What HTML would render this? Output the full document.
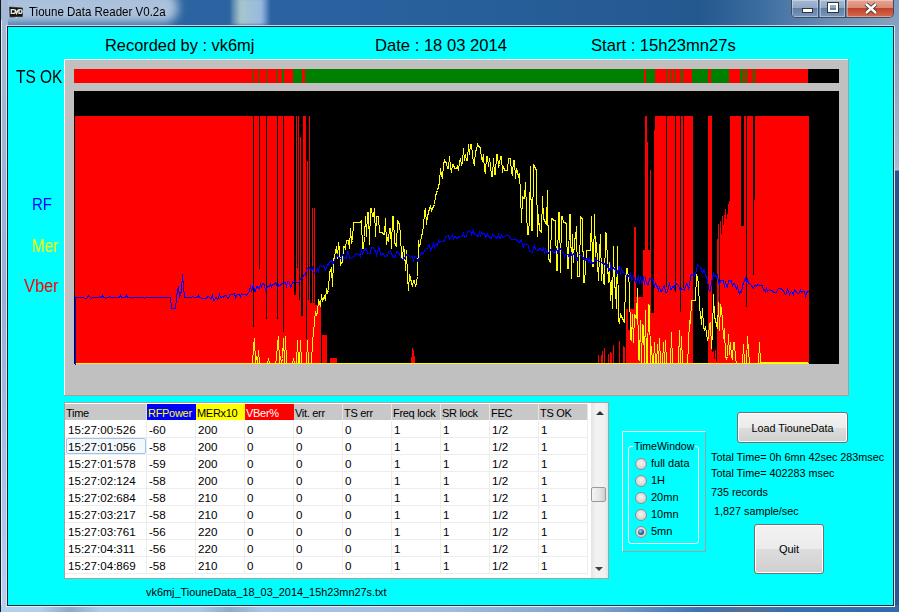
<!DOCTYPE html>
<html><head><meta charset="utf-8">
<style>
html,body{margin:0;padding:0;width:899px;height:612px;overflow:hidden;background:#2c5e94;font-family:"Liberation Sans",sans-serif;}
div{box-sizing:border-box}
.a{position:absolute;white-space:pre}
#tb{position:absolute;left:0;top:0;width:899px;height:27px;overflow:hidden;
 background:linear-gradient(90deg,#2d66a2 0px,#2a63a0 300px,#255c96 600px,#24598f 700px,#3b6d9f 760px,#6a8db4 830px,#88a2c0 899px);}
#lf{position:absolute;left:0;top:0;width:8px;height:612px;background:linear-gradient(180deg,#a4bad6,#94b2d6 300px,#b4d0f0)}
#rf{position:absolute;left:893px;top:0;width:6px;height:612px;background:linear-gradient(180deg,#7f9cc0 0,#a6b8ce 165px,#b4c2d4 170px,#28548e 171px,#2a5894)}
#bf{position:absolute;left:0;top:605px;width:899px;height:7px;background:linear-gradient(90deg,#b4d0f0 0,#a8c6ea 250px,#9cbce0 450px,#7aa0cc 600px,#3a74b4 700px,#2f6aac 899px)}
#client{position:absolute;left:8px;top:27px;width:885px;height:578px;background:#00ffff}
.hc{position:absolute;top:404px;height:16px;font-size:11px;line-height:18px;padding-left:1px;white-space:pre;letter-spacing:-0.3px}
.c{position:absolute;height:17px;font-size:11.6px;line-height:18px;padding-left:2px;white-space:pre;color:#000;border-bottom:1px solid #ededed;border-right:1px solid #ededed}
.btn{position:absolute;border:1px solid #707070;border-radius:3px;background:linear-gradient(180deg,#f2f2f2 0%,#ebebeb 50%,#dddddd 51%,#cfcfcf 100%);box-shadow:inset 0 0 0 1px #fcfcfc;font-size:11px;color:#000;text-align:center}
.rad{position:absolute;left:635px;width:12px;height:12px;border-radius:50%;border:1px solid #8e8f8f;background:radial-gradient(circle at 50% 40%,#f4f4f4,#d4d4d4 70%,#bdbdbd)}
.rl{position:absolute;left:651px;font-size:11px;white-space:pre;color:#000}
</style></head><body>
<div id="tb"><div class="a" style="left:-12px;top:-8px;width:190px;height:31px;background:#acc2dc;border-radius:14px;filter:blur(5px)"></div></div>
<div class="a" style="left:231px;top:-2px;width:38px;height:27px;background:linear-gradient(90deg,rgba(190,215,205,.2),rgba(190,215,210,.85) 25%,rgba(170,200,235,.85) 80%,rgba(150,185,225,.2));filter:blur(1.5px)"></div>
<div id="lf"></div><div id="rf"></div><div id="bf"></div>
<div class="a" style="left:0;top:0;width:1px;height:612px;background:#101820"></div>
<div class="a" style="left:1px;top:20px;width:1px;height:585px;background:#e4eefa"></div>
<div class="a" style="left:6px;top:25px;width:1px;height:581px;background:#d4e2f4"></div>
<div class="a" style="left:6px;top:25px;width:888px;height:1px;background:#c8d8ee"></div>
<div class="a" style="left:7px;top:26px;width:887px;height:580px;background:#1a2436"></div>
<div class="a" style="left:894px;top:26px;width:1px;height:580px;background:#d8e4f2"></div>
<div class="a" style="left:6px;top:606px;width:889px;height:1px;background:#e8f0fa"></div>
<div class="a" style="left:40px;top:607px;width:60px;height:5px;background:linear-gradient(90deg,rgba(60,80,110,0),rgba(60,80,110,.3),rgba(60,80,110,0))"></div>
<div class="a" style="left:200px;top:607px;width:60px;height:5px;background:linear-gradient(90deg,rgba(60,80,110,0),rgba(60,80,110,.25),rgba(60,80,110,0))"></div>
<div class="a" style="left:700px;top:607px;width:90px;height:5px;background:linear-gradient(90deg,rgba(110,110,120,0),rgba(110,110,120,.5),rgba(110,110,120,0))"></div>
<div id="client"></div>
<!-- title -->
<svg class="a" style="left:9px;top:6px" width="15" height="13" viewBox="0 0 15 13">
 <path d="M0.5 1l13 1v8.5l-12.5 0.5z" fill="#161616" stroke="#2a2a2a" stroke-width="0.6"/>
 <path d="M6 11.2h3l-1.5 1.3z" fill="#d0dcea"/>
 <path d="M2.3 3.6h2.2a2 1.9 0 0 1 0 3.8h-2.2z M6.3 3.6l1.4 3.8 1.4-3.8 M10 7.4v-3.8h1a2 1.9 0 0 1 0 3.8z" fill="none" stroke="#ecebe4" stroke-width="1.3"/>
</svg>
<div class="a" style="left:29px;top:5px;font-size:12.4px;transform:scaleX(0.93);transform-origin:0 0;color:#000">Tioune Data Reader V0.2a</div>
<!-- caption buttons -->
<div class="a" style="left:791px;top:0;width:103px;height:18px;border:1px solid #3c4c62;border-top:none;border-radius:0 0 5px 5px;overflow:hidden;background:#6a8ab0">
 <div class="a" style="left:0;top:0;width:27px;height:17px;background:linear-gradient(180deg,#a6bad2 0%,#90a8c6 45%,#5f7fa6 50%,#7a98bc 100%);border-right:1px solid #3c4c62;box-shadow:inset 0 0 0 1px rgba(255,255,255,.35)"></div>
 <div class="a" style="left:28px;top:0;width:26px;height:17px;background:linear-gradient(180deg,#a6bad2 0%,#90a8c6 45%,#5f7fa6 50%,#7a98bc 100%);border-right:1px solid #3c4c62;box-shadow:inset 0 0 0 1px rgba(255,255,255,.35)"></div>
 <div class="a" style="left:55px;top:0;width:47px;height:17px;background:linear-gradient(180deg,#e8a493 0%,#d98a74 45%,#c2412a 50%,#d66a50 100%);box-shadow:inset 0 0 0 1px rgba(255,255,255,.35)"></div>
 <div class="a" style="left:10px;top:8px;width:9px;height:3px;background:#fff;border:1px solid #333;box-sizing:content-box;"></div>
 <div class="a" style="left:36px;top:3px;width:10px;height:9px;border:2px solid #fff;outline:1px solid #333;box-sizing:border-box"></div>
 <svg class="a" style="left:71px;top:2px" width="16" height="13" viewBox="0 0 16 13"><path d="M3 2l10 9M13 2L3 11" stroke="#333" stroke-width="4.2"/><path d="M3 2l10 9M13 2L3 11" stroke="#fff" stroke-width="2.4"/></svg>
</div>
<!-- header texts -->
<div class="a" style="left:105px;top:36px;font-size:16.4px">Recorded by : vk6mj</div>
<div class="a" style="left:375px;top:36px;font-size:16.6px">Date : 18 03 2014</div>
<div class="a" style="left:591px;top:36px;font-size:16.6px">Start : 15h23mn27s</div>
<div class="a" style="left:16px;top:66px;font-size:18.6px;transform:scaleX(0.83);transform-origin:0 0">TS OK</div>
<div class="a" style="left:32px;top:195px;font-size:17px;transform:scaleX(0.88);transform-origin:0 0;color:#0000ff">RF</div>
<div class="a" style="left:32px;top:236px;font-size:17.6px;transform:scaleX(0.88);transform-origin:0 0;color:#ffff00">Mer</div>
<div class="a" style="left:24px;top:276px;font-size:17.6px;transform:scaleX(0.93);transform-origin:0 0;color:#ff0000">Vber</div>
<svg width="899" height="612" style="position:absolute;left:0;top:0" shape-rendering="crispEdges">
<rect x="64" y="59" width="785" height="337" fill="#c0c0c0"/>
<rect x="64" y="59" width="785" height="1" fill="#ffffff"/><rect x="64" y="59" width="1" height="337" fill="#ffffff"/>
<rect x="64" y="395" width="785" height="1" fill="#a89c9c"/><rect x="848" y="59" width="1" height="337" fill="#a89c9c"/>
<rect x="74" y="69" width="765" height="14" fill="#000"/>
<rect x="74" y="69" width="178" height="14" fill="#ff0000"/>
<rect x="252" y="69" width="1" height="14" fill="#008000"/>
<rect x="253" y="69" width="5" height="14" fill="#ff0000"/>
<rect x="258" y="69" width="1" height="14" fill="#008000"/>
<rect x="259" y="69" width="7" height="14" fill="#ff0000"/>
<rect x="266" y="69" width="1" height="14" fill="#008000"/>
<rect x="267" y="69" width="9" height="14" fill="#ff0000"/>
<rect x="276" y="69" width="1" height="14" fill="#008000"/>
<rect x="277" y="69" width="5" height="14" fill="#ff0000"/>
<rect x="282" y="69" width="2" height="14" fill="#008000"/>
<rect x="284" y="69" width="9" height="14" fill="#ff0000"/>
<rect x="293" y="69" width="9" height="14" fill="#008000"/>
<rect x="302" y="69" width="3" height="14" fill="#ff0000"/>
<rect x="305" y="69" width="339" height="14" fill="#008000"/>
<rect x="644" y="69" width="2" height="14" fill="#ff0000"/>
<rect x="646" y="69" width="9" height="14" fill="#008000"/>
<rect x="655" y="69" width="11" height="14" fill="#ff0000"/>
<rect x="666" y="69" width="1" height="14" fill="#008000"/>
<rect x="667" y="69" width="4" height="14" fill="#ff0000"/>
<rect x="671" y="69" width="1" height="14" fill="#008000"/>
<rect x="672" y="69" width="3" height="14" fill="#ff0000"/>
<rect x="675" y="69" width="1" height="14" fill="#008000"/>
<rect x="676" y="69" width="4" height="14" fill="#ff0000"/>
<rect x="680" y="69" width="1" height="14" fill="#008000"/>
<rect x="681" y="69" width="2" height="14" fill="#ff0000"/>
<rect x="683" y="69" width="1" height="14" fill="#008000"/>
<rect x="684" y="69" width="8" height="14" fill="#ff0000"/>
<rect x="692" y="69" width="16" height="14" fill="#008000"/>
<rect x="708" y="69" width="3" height="14" fill="#ff0000"/>
<rect x="711" y="69" width="18" height="14" fill="#008000"/>
<rect x="729" y="69" width="11" height="14" fill="#ff0000"/>
<rect x="740" y="69" width="3" height="14" fill="#008000"/>
<rect x="743" y="69" width="2" height="14" fill="#ff0000"/>
<rect x="745" y="69" width="2" height="14" fill="#008000"/>
<rect x="747" y="69" width="6" height="14" fill="#ff0000"/>
<rect x="753" y="69" width="2" height="14" fill="#008000"/>
<rect x="755" y="69" width="53" height="14" fill="#ff0000"/>
<rect x="74" y="91" width="765" height="273" fill="#000"/>
<rect x="75" y="116" width="178" height="248" fill="#ff0000"/>
<rect x="253" y="327" width="1" height="37" fill="#ff0000"/>
<rect x="254" y="116" width="5" height="248" fill="#ff0000"/>
<rect x="259" y="269" width="1" height="95" fill="#ff0000"/>
<rect x="260" y="116" width="6" height="248" fill="#ff0000"/>
<rect x="266" y="319" width="1" height="45" fill="#ff0000"/>
<rect x="267" y="116" width="10" height="248" fill="#ff0000"/>
<rect x="277" y="319" width="1" height="45" fill="#ff0000"/>
<rect x="278" y="116" width="5" height="248" fill="#ff0000"/>
<rect x="283" y="332" width="1" height="32" fill="#ff0000"/>
<rect x="284" y="116" width="10" height="248" fill="#ff0000"/>
<rect x="294" y="295" width="2" height="69" fill="#ff0000"/>
<rect x="296" y="116" width="1" height="248" fill="#ff0000"/>
<rect x="297" y="268" width="1" height="96" fill="#ff0000"/>
<rect x="298" y="116" width="1" height="248" fill="#ff0000"/>
<rect x="299" y="300" width="1" height="64" fill="#ff0000"/>
<rect x="300" y="137" width="1" height="227" fill="#ff0000"/>
<rect x="301" y="316" width="2" height="48" fill="#ff0000"/>
<rect x="303" y="116" width="3" height="248" fill="#ff0000"/>
<rect x="306" y="339" width="1" height="25" fill="#ff0000"/>
<rect x="307" y="161" width="1" height="203" fill="#ff0000"/>
<rect x="308" y="300" width="1" height="64" fill="#ff0000"/>
<rect x="309" y="116" width="1" height="248" fill="#ff0000"/>
<rect x="310" y="303" width="2" height="61" fill="#ff0000"/>
<rect x="312" y="208" width="1" height="156" fill="#ff0000"/>
<rect x="313" y="303" width="1" height="61" fill="#ff0000"/>
<rect x="314" y="208" width="1" height="156" fill="#ff0000"/>
<rect x="315" y="305" width="6" height="59" fill="#ff0000"/>
<rect x="322" y="335" width="5" height="29" fill="#ff0000"/>
<rect x="330" y="358" width="7" height="6" fill="#ff0000"/>
<rect x="411" y="357" width="1" height="7" fill="#ff0000"/>
<rect x="412" y="348" width="1" height="16" fill="#ff0000"/>
<rect x="413" y="350" width="1" height="14" fill="#ff0000"/>
<rect x="414" y="356" width="1" height="8" fill="#ff0000"/>
<rect x="598" y="355" width="1" height="9" fill="#ff0000"/>
<rect x="601" y="355" width="1" height="9" fill="#ff0000"/>
<rect x="602" y="351" width="1" height="13" fill="#ff0000"/>
<rect x="604" y="348" width="1" height="16" fill="#ff0000"/>
<rect x="608" y="354" width="1" height="10" fill="#ff0000"/>
<rect x="610" y="352" width="1" height="12" fill="#ff0000"/>
<rect x="611" y="353" width="1" height="11" fill="#ff0000"/>
<rect x="613" y="345" width="1" height="19" fill="#ff0000"/>
<rect x="619" y="341" width="1" height="23" fill="#ff0000"/>
<rect x="623" y="346" width="1" height="18" fill="#ff0000"/>
<rect x="624" y="347" width="1" height="17" fill="#ff0000"/>
<rect x="626" y="309" width="2" height="55" fill="#ff0000"/>
<rect x="628" y="330" width="2" height="34" fill="#ff0000"/>
<rect x="630" y="309" width="4" height="55" fill="#ff0000"/>
<rect x="634" y="227" width="2" height="137" fill="#ff0000"/>
<rect x="636" y="297" width="7" height="67" fill="#ff0000"/>
<rect x="643" y="250" width="2" height="114" fill="#ff0000"/>
<rect x="645" y="116" width="2" height="248" fill="#ff0000"/>
<rect x="647" y="142" width="1" height="222" fill="#ff0000"/>
<rect x="648" y="250" width="2" height="114" fill="#ff0000"/>
<rect x="650" y="170" width="1" height="194" fill="#ff0000"/>
<rect x="651" y="313" width="3" height="51" fill="#ff0000"/>
<rect x="654" y="130" width="1" height="234" fill="#ff0000"/>
<rect x="655" y="116" width="11" height="248" fill="#ff0000"/>
<rect x="666" y="287" width="1" height="77" fill="#ff0000"/>
<rect x="667" y="116" width="8" height="248" fill="#ff0000"/>
<rect x="675" y="292" width="1" height="72" fill="#ff0000"/>
<rect x="676" y="116" width="4" height="248" fill="#ff0000"/>
<rect x="680" y="312" width="1" height="52" fill="#ff0000"/>
<rect x="681" y="116" width="2" height="248" fill="#ff0000"/>
<rect x="683" y="288" width="1" height="76" fill="#ff0000"/>
<rect x="684" y="116" width="9" height="248" fill="#ff0000"/>
<rect x="708" y="116" width="4" height="248" fill="#ff0000"/>
<rect x="712" y="352" width="1" height="12" fill="#ff0000"/>
<rect x="713" y="351" width="1" height="13" fill="#ff0000"/>
<rect x="714" y="359" width="1" height="5" fill="#ff0000"/>
<rect x="715" y="350" width="1" height="14" fill="#ff0000"/>
<rect x="716" y="361" width="1" height="3" fill="#ff0000"/>
<rect x="717" y="239" width="1" height="125" fill="#ff0000"/>
<rect x="718" y="224" width="1" height="140" fill="#ff0000"/>
<rect x="719" y="303" width="1" height="61" fill="#ff0000"/>
<rect x="720" y="221" width="1" height="143" fill="#ff0000"/>
<rect x="721" y="234" width="1" height="130" fill="#ff0000"/>
<rect x="722" y="216" width="1" height="148" fill="#ff0000"/>
<rect x="723" y="225" width="1" height="139" fill="#ff0000"/>
<rect x="724" y="215" width="1" height="149" fill="#ff0000"/>
<rect x="725" y="209" width="1" height="155" fill="#ff0000"/>
<rect x="726" y="219" width="1" height="145" fill="#ff0000"/>
<rect x="727" y="214" width="1" height="150" fill="#ff0000"/>
<rect x="728" y="204" width="1" height="160" fill="#ff0000"/>
<rect x="729" y="201" width="1" height="163" fill="#ff0000"/>
<rect x="730" y="116" width="11" height="248" fill="#ff0000"/>
<rect x="741" y="226" width="3" height="138" fill="#ff0000"/>
<rect x="744" y="116" width="2" height="248" fill="#ff0000"/>
<rect x="746" y="307" width="1" height="57" fill="#ff0000"/>
<rect x="747" y="116" width="6" height="248" fill="#ff0000"/>
<rect x="753" y="275" width="1" height="89" fill="#ff0000"/>
<rect x="754" y="200" width="1" height="164" fill="#ff0000"/>
<rect x="755" y="116" width="54" height="248" fill="#ff0000"/>
<rect x="75" y="363" width="734" height="1" fill="#ffff00"/>
<polyline fill="none" stroke="#ffff00" stroke-width="1" points="75.5,363.5 76.5,363.5 77.5,363.5 78.5,363.5 79.5,363.5 80.5,363.5 81.5,363.5 82.5,363.5 83.5,363.5 84.5,363.5 85.5,363.5 86.5,363.5 87.5,363.5 88.5,363.5 89.5,363.5 90.5,363.5 91.5,363.5 92.5,363.5 93.5,363.5 94.5,363.5 95.5,363.5 96.5,363.5 97.5,363.5 98.5,363.5 99.5,363.5 100.5,363.5 101.5,363.5 102.5,363.5 103.5,363.5 104.5,363.5 105.5,363.5 106.5,363.5 107.5,363.5 108.5,363.5 109.5,363.5 110.5,363.5 111.5,363.5 112.5,363.5 113.5,363.5 114.5,363.5 115.5,363.5 116.5,363.5 117.5,363.5 118.5,363.5 119.5,363.5 120.5,363.5 121.5,363.5 122.5,363.5 123.5,363.5 124.5,363.5 125.5,363.5 126.5,363.5 127.5,363.5 128.5,363.5 129.5,363.5 130.5,363.5 131.5,363.5 132.5,363.5 133.5,363.5 134.5,363.5 135.5,363.5 136.5,363.5 137.5,363.5 138.5,363.5 139.5,363.5 140.5,363.5 141.5,363.5 142.5,363.5 143.5,363.5 144.5,363.5 145.5,363.5 146.5,363.5 147.5,363.5 148.5,363.5 149.5,363.5 150.5,363.5 151.5,363.5 152.5,363.5 153.5,363.5 154.5,363.5 155.5,363.5 156.5,363.5 157.5,363.5 158.5,363.5 159.5,363.5 160.5,363.5 161.5,363.5 162.5,363.5 163.5,363.5 164.5,363.5 165.5,363.5 166.5,363.5 167.5,363.5 168.5,363.5 169.5,363.5 170.5,363.5 171.5,363.5 172.5,363.5 173.5,363.5 174.5,363.5 175.5,363.5 176.5,363.5 177.5,363.5 178.5,363.5 179.5,363.5 180.5,363.5 181.5,363.5 182.5,363.5 183.5,363.5 184.5,363.5 185.5,363.5 186.5,363.5 187.5,363.5 188.5,363.5 189.5,363.5 190.5,363.5 191.5,363.5 192.5,363.5 193.5,363.5 194.5,363.5 195.5,363.5 196.5,363.5 197.5,363.5 198.5,363.5 199.5,363.5 200.5,363.5 201.5,363.5 202.5,363.5 203.5,363.5 204.5,363.5 205.5,363.5 206.5,363.5 207.5,363.5 208.5,363.5 209.5,363.5 210.5,363.5 211.5,363.5 212.5,363.5 213.5,363.5 214.5,363.5 215.5,363.5 216.5,363.5 217.5,363.5 218.5,363.5 219.5,363.5 220.5,363.5 221.5,363.5 222.5,363.5 223.5,363.5 224.5,363.5 225.5,363.5 226.5,363.5 227.5,363.5 228.5,363.5 229.5,363.5 230.5,363.5 231.5,363.5 232.5,363.5 233.5,363.5 234.5,363.5 235.5,363.5 236.5,363.5 237.5,363.5 238.5,363.5 239.5,363.5 240.5,363.5 241.5,363.5 242.5,363.5 243.5,363.5 244.5,363.5 245.5,363.5 246.5,363.5 247.5,363.5 248.5,363.5 249.5,363.5 250.5,363.5 251.5,363.5 252.5,363.5 253.5,346.5 254.5,338.5 255.5,363.5 256.5,356.5 257.5,363.5 258.5,350.5 259.5,363.5 260.5,363.5 261.5,363.5 262.5,363.5 263.5,363.5 264.5,363.5 265.5,363.5 266.5,363.5 267.5,363.5 268.5,358.5 269.5,363.5 270.5,363.5 271.5,363.5 272.5,363.5 273.5,363.5 274.5,363.5 275.5,363.5 276.5,358.5 277.5,344.5 278.5,336.5 279.5,363.5 280.5,356.5 281.5,363.5 282.5,358.5 283.5,338.5 284.5,363.5 285.5,336.5 286.5,363.5 287.5,363.5 288.5,363.5 289.5,363.5 290.5,363.5 291.5,363.5 292.5,363.5 293.5,358.5 294.5,363.5 295.5,363.5 296.5,363.5 297.5,340.5 298.5,363.5 299.5,363.5 300.5,340.5 301.5,363.5 302.5,363.5 303.5,363.5 304.5,363.5 305.5,363.5 306.5,363.5 307.5,340.5 308.5,363.5 309.5,363.5 310.5,363.5 311.5,363.5 312.5,340.5 313.5,334.5 314.5,320.5 315.5,312.5 316.5,314.5 317.5,312.5 318.5,300.5 319.5,302.5 320.5,306.5 321.5,294.5 322.5,300.5 323.5,298.5 324.5,296.5 325.5,300.5 326.5,288.5 327.5,292.5 328.5,290.5 329.5,272.5 330.5,270.5 331.5,268.5 332.5,286.5 333.5,260.5 334.5,256.5 335.5,252.5 336.5,246.5 337.5,258.5 338.5,242.5 339.5,248.5 340.5,264.5 341.5,262.5 342.5,262.5 343.5,246.5 344.5,246.5 345.5,248.5 346.5,240.5 347.5,240.5 348.5,240.5 349.5,248.5 350.5,228.5 351.5,242.5 352.5,240.5 353.5,222.5 354.5,222.5 355.5,222.5 356.5,222.5 357.5,222.5 358.5,222.5 359.5,222.5 360.5,222.5 361.5,220.5 362.5,248.5 363.5,248.5 364.5,236.5 365.5,216.5 366.5,236.5 367.5,212.5 368.5,212.5 369.5,244.5 370.5,208.5 371.5,208.5 372.5,216.5 373.5,216.5 374.5,208.5 375.5,236.5 376.5,216.5 377.5,216.5 378.5,216.5 379.5,232.5 380.5,232.5 381.5,232.5 382.5,232.5 383.5,234.5 384.5,234.5 385.5,218.5 386.5,244.5 387.5,238.5 388.5,240.5 389.5,228.5 390.5,228.5 391.5,248.5 392.5,216.5 393.5,216.5 394.5,242.5 395.5,244.5 396.5,246.5 397.5,220.5 398.5,222.5 399.5,224.5 400.5,234.5 401.5,256.5 402.5,258.5 403.5,246.5 404.5,250.5 405.5,270.5 406.5,250.5 407.5,276.5 408.5,290.5 409.5,274.5 410.5,278.5 411.5,282.5 412.5,286.5 413.5,280.5 414.5,280.5 415.5,286.5 416.5,282.5 417.5,276.5 418.5,240.5 419.5,246.5 420.5,242.5 421.5,236.5 422.5,232.5 423.5,226.5 424.5,212.5 425.5,208.5 426.5,224.5 427.5,216.5 428.5,212.5 429.5,208.5 430.5,206.5 431.5,210.5 432.5,208.5 433.5,206.5 434.5,204.5 435.5,196.5 436.5,192.5 437.5,190.5 438.5,186.5 439.5,182.5 440.5,168.5 441.5,174.5 442.5,178.5 443.5,164.5 444.5,160.5 445.5,162.5 446.5,162.5 447.5,168.5 448.5,168.5 449.5,156.5 450.5,166.5 451.5,172.5 452.5,164.5 453.5,164.5 454.5,168.5 455.5,168.5 456.5,168.5 457.5,166.5 458.5,170.5 459.5,162.5 460.5,158.5 461.5,164.5 462.5,162.5 463.5,148.5 464.5,160.5 465.5,154.5 466.5,160.5 467.5,160.5 468.5,144.5 469.5,154.5 470.5,144.5 471.5,144.5 472.5,154.5 473.5,162.5 474.5,164.5 475.5,150.5 476.5,150.5 477.5,144.5 478.5,146.5 479.5,146.5 480.5,148.5 481.5,158.5 482.5,160.5 483.5,154.5 484.5,170.5 485.5,172.5 486.5,156.5 487.5,156.5 488.5,166.5 489.5,158.5 490.5,164.5 491.5,176.5 492.5,176.5 493.5,158.5 494.5,174.5 495.5,174.5 496.5,154.5 497.5,154.5 498.5,166.5 499.5,164.5 500.5,156.5 501.5,156.5 502.5,172.5 503.5,166.5 504.5,170.5 505.5,170.5 506.5,170.5 507.5,170.5 508.5,158.5 509.5,158.5 510.5,158.5 511.5,172.5 512.5,174.5 513.5,160.5 514.5,160.5 515.5,178.5 516.5,168.5 517.5,172.5 518.5,176.5 519.5,174.5 520.5,192.5 521.5,222.5 522.5,196.5 523.5,198.5 524.5,198.5 525.5,182.5 526.5,210.5 527.5,234.5 528.5,234.5 529.5,218.5 530.5,166.5 531.5,230.5 532.5,230.5 533.5,164.5 534.5,166.5 535.5,168.5 536.5,170.5 537.5,236.5 538.5,214.5 539.5,230.5 540.5,230.5 541.5,232.5 542.5,196.5 543.5,218.5 544.5,220.5 545.5,222.5 546.5,224.5 547.5,190.5 548.5,258.5 549.5,260.5 550.5,262.5 551.5,218.5 552.5,218.5 553.5,220.5 554.5,220.5 555.5,220.5 556.5,270.5 557.5,270.5 558.5,212.5 559.5,212.5 560.5,272.5 561.5,216.5 562.5,216.5 563.5,222.5 564.5,222.5 565.5,222.5 566.5,224.5 567.5,268.5 568.5,268.5 569.5,214.5 570.5,214.5 571.5,278.5 572.5,234.5 573.5,262.5 574.5,238.5 575.5,238.5 576.5,226.5 577.5,276.5 578.5,276.5 579.5,276.5 580.5,216.5 581.5,218.5 582.5,218.5 583.5,282.5 584.5,282.5 585.5,268.5 586.5,250.5 587.5,250.5 588.5,250.5 589.5,250.5 590.5,250.5 591.5,216.5 592.5,266.5 593.5,266.5 594.5,214.5 595.5,256.5 596.5,242.5 597.5,262.5 598.5,280.5 599.5,254.5 600.5,234.5 601.5,280.5 602.5,264.5 603.5,282.5 604.5,284.5 605.5,232.5 606.5,234.5 607.5,264.5 608.5,282.5 609.5,262.5 610.5,300.5 611.5,280.5 612.5,308.5 613.5,246.5 614.5,286.5 615.5,288.5 616.5,308.5 617.5,246.5 618.5,320.5 619.5,322.5 620.5,314.5 621.5,316.5 622.5,318.5 623.5,320.5 624.5,322.5 625.5,282.5 626.5,268.5 627.5,268.5 628.5,278.5 629.5,284.5 630.5,338.5 631.5,340.5 632.5,314.5 633.5,342.5 634.5,314.5 635.5,316.5 636.5,318.5 637.5,288.5 638.5,358.5 639.5,360.5 640.5,320.5 641.5,363.5 642.5,324.5 643.5,326.5 644.5,363.5 645.5,310.5 646.5,363.5 647.5,363.5 648.5,304.5 649.5,306.5 650.5,363.5 651.5,346.5 652.5,363.5 653.5,363.5 654.5,342.5 655.5,363.5 656.5,363.5 657.5,344.5 658.5,363.5 659.5,338.5 660.5,363.5 661.5,363.5 662.5,363.5 663.5,342.5 664.5,363.5 665.5,340.5 666.5,363.5 667.5,363.5 668.5,363.5 669.5,363.5 670.5,363.5 671.5,332.5 672.5,363.5 673.5,363.5 674.5,363.5 675.5,363.5 676.5,363.5 677.5,363.5 678.5,363.5 679.5,330.5 680.5,363.5 681.5,336.5 682.5,363.5 683.5,363.5 684.5,363.5 685.5,363.5 686.5,363.5 687.5,363.5 688.5,344.5 689.5,320.5 690.5,322.5 691.5,300.5 692.5,300.5 693.5,300.5 694.5,300.5 695.5,300.5 696.5,274.5 697.5,278.5 698.5,282.5 699.5,308.5 700.5,312.5 701.5,324.5 702.5,308.5 703.5,326.5 704.5,330.5 705.5,326.5 706.5,332.5 707.5,340.5 708.5,336.5 709.5,324.5 710.5,322.5 711.5,348.5 712.5,332.5 713.5,294.5 714.5,316.5 715.5,320.5 716.5,324.5 717.5,328.5 718.5,302.5 719.5,330.5 720.5,304.5 721.5,308.5 722.5,320.5 723.5,338.5 724.5,328.5 725.5,356.5 726.5,358.5 727.5,356.5 728.5,334.5 729.5,354.5 730.5,342.5 731.5,356.5 732.5,358.5 733.5,342.5 734.5,342.5 735.5,358.5 736.5,363.5 737.5,363.5 738.5,363.5 739.5,363.5 740.5,363.5 741.5,363.5 742.5,363.5 743.5,344.5 744.5,363.5 745.5,363.5 746.5,363.5 747.5,336.5 748.5,350.5 749.5,363.5 750.5,363.5 751.5,363.5 752.5,363.5 753.5,363.5 754.5,363.5 755.5,363.5 756.5,363.5 757.5,363.5 758.5,363.5 759.5,342.5 760.5,362.5 761.5,362.5 762.5,362.5 763.5,362.5 764.5,362.5 765.5,362.5 766.5,362.5 767.5,362.5 768.5,362.5 769.5,362.5 770.5,362.5 771.5,362.5 772.5,362.5 773.5,362.5 774.5,362.5 775.5,362.5 776.5,362.5 777.5,362.5 778.5,362.5 779.5,362.5 780.5,362.5 781.5,362.5 782.5,362.5 783.5,362.5 784.5,362.5 785.5,362.5 786.5,362.5 787.5,362.5 788.5,362.5 789.5,362.5 790.5,362.5 791.5,362.5 792.5,362.5 793.5,362.5 794.5,362.5 795.5,362.5 796.5,362.5 797.5,362.5 798.5,362.5 799.5,362.5 800.5,362.5 801.5,362.5 802.5,362.5 803.5,362.5 804.5,362.5 805.5,362.5 806.5,362.5 807.5,362.5 808.5,363.5"/>
<polyline fill="none" stroke="#0000ff" stroke-width="1" points="75.5,364.5 75.5,297.5 76.5,297.5 77.5,297.5 78.5,297.5 79.5,297.5 80.5,297.5 81.5,297.5 82.5,297.5 83.5,297.5 84.5,298.5 85.5,298.5 86.5,298.5 87.5,297.5 88.5,295.5 89.5,296.5 90.5,297.5 91.5,298.5 92.5,297.5 93.5,297.5 94.5,297.5 95.5,297.5 96.5,297.5 97.5,297.5 98.5,297.5 99.5,296.5 100.5,297.5 101.5,297.5 102.5,295.5 103.5,297.5 104.5,297.5 105.5,298.5 106.5,297.5 107.5,297.5 108.5,297.5 109.5,296.5 110.5,297.5 111.5,297.5 112.5,297.5 113.5,297.5 114.5,297.5 115.5,297.5 116.5,297.5 117.5,297.5 118.5,297.5 119.5,297.5 120.5,295.5 121.5,297.5 122.5,297.5 123.5,297.5 124.5,297.5 125.5,297.5 126.5,295.5 127.5,297.5 128.5,297.5 129.5,297.5 130.5,297.5 131.5,297.5 132.5,298.5 133.5,297.5 134.5,297.5 135.5,297.5 136.5,297.5 137.5,297.5 138.5,297.5 139.5,297.5 140.5,297.5 141.5,297.5 142.5,297.5 143.5,297.5 144.5,298.5 145.5,297.5 146.5,297.5 147.5,297.5 148.5,297.5 149.5,297.5 150.5,297.5 151.5,297.5 152.5,297.5 153.5,297.5 154.5,297.5 155.5,297.5 156.5,297.5 157.5,297.5 158.5,297.5 159.5,297.5 160.5,297.5 161.5,297.5 162.5,297.5 163.5,297.5 164.5,297.5 165.5,297.5 166.5,297.5 167.5,297.5 168.5,297.5 169.5,297.5 170.5,297.5 171.5,308.5 172.5,308.5 173.5,308.5 174.5,308.5 175.5,308.5 176.5,297.5 177.5,290.5 178.5,286.5 179.5,297.5 180.5,294.5 181.5,290.5 182.5,274.5 183.5,286.5 184.5,297.5 185.5,297.5 186.5,297.5 187.5,297.5 188.5,297.5 189.5,297.5 190.5,297.5 191.5,297.5 192.5,296.5 193.5,297.5 194.5,297.5 195.5,297.5 196.5,297.5 197.5,297.5 198.5,295.5 199.5,297.5 200.5,297.5 201.5,298.5 202.5,298.5 203.5,298.5 204.5,298.5 205.5,298.5 206.5,298.5 207.5,296.5 208.5,296.5 209.5,297.5 210.5,298.5 211.5,298.5 212.5,294.5 213.5,300.5 214.5,300.5 215.5,297.5 216.5,297.5 217.5,299.5 218.5,298.5 219.5,294.5 220.5,297.5 221.5,297.5 222.5,296.5 223.5,297.5 224.5,295.5 225.5,295.5 226.5,295.5 227.5,298.5 228.5,298.5 229.5,295.5 230.5,294.5 231.5,294.5 232.5,294.5 233.5,293.5 234.5,293.5 235.5,297.5 236.5,295.5 237.5,294.5 238.5,294.5 239.5,294.5 240.5,296.5 241.5,293.5 242.5,294.5 243.5,294.5 244.5,294.5 245.5,294.5 246.5,295.5 247.5,293.5 248.5,292.5 249.5,291.5 250.5,285.5 251.5,291.5 252.5,288.5 253.5,283.5 254.5,291.5 255.5,291.5 256.5,286.5 257.5,286.5 258.5,288.5 259.5,288.5 260.5,284.5 261.5,286.5 262.5,283.5 263.5,283.5 264.5,285.5 265.5,290.5 266.5,290.5 267.5,286.5 268.5,286.5 269.5,286.5 270.5,284.5 271.5,286.5 272.5,284.5 273.5,284.5 274.5,284.5 275.5,282.5 276.5,283.5 277.5,288.5 278.5,284.5 279.5,285.5 280.5,285.5 281.5,283.5 282.5,283.5 283.5,283.5 284.5,282.5 285.5,282.5 286.5,287.5 287.5,281.5 288.5,281.5 289.5,282.5 290.5,287.5 291.5,286.5 292.5,281.5 293.5,282.5 294.5,281.5 295.5,281.5 296.5,282.5 297.5,282.5 298.5,282.5 299.5,281.5 300.5,278.5 301.5,278.5 302.5,278.5 303.5,275.5 304.5,274.5 305.5,275.5 306.5,269.5 307.5,268.5 308.5,268.5 309.5,267.5 310.5,269.5 311.5,270.5 312.5,267.5 313.5,271.5 314.5,272.5 315.5,272.5 316.5,271.5 317.5,269.5 318.5,271.5 319.5,266.5 320.5,265.5 321.5,266.5 322.5,266.5 323.5,265.5 324.5,267.5 325.5,269.5 326.5,267.5 327.5,264.5 328.5,265.5 329.5,261.5 330.5,261.5 331.5,260.5 332.5,264.5 333.5,263.5 334.5,259.5 335.5,258.5 336.5,257.5 337.5,255.5 338.5,257.5 339.5,257.5 340.5,258.5 341.5,258.5 342.5,252.5 343.5,259.5 344.5,257.5 345.5,257.5 346.5,258.5 347.5,251.5 348.5,251.5 349.5,258.5 350.5,258.5 351.5,257.5 352.5,257.5 353.5,256.5 354.5,256.5 355.5,253.5 356.5,253.5 357.5,254.5 358.5,254.5 359.5,254.5 360.5,256.5 361.5,248.5 362.5,254.5 363.5,250.5 364.5,250.5 365.5,248.5 366.5,248.5 367.5,253.5 368.5,253.5 369.5,253.5 370.5,253.5 371.5,247.5 372.5,247.5 373.5,247.5 374.5,250.5 375.5,250.5 376.5,255.5 377.5,252.5 378.5,247.5 379.5,249.5 380.5,254.5 381.5,255.5 382.5,253.5 383.5,253.5 384.5,256.5 385.5,256.5 386.5,255.5 387.5,256.5 388.5,251.5 389.5,251.5 390.5,250.5 391.5,253.5 392.5,255.5 393.5,257.5 394.5,257.5 395.5,257.5 396.5,251.5 397.5,251.5 398.5,253.5 399.5,253.5 400.5,257.5 401.5,258.5 402.5,259.5 403.5,259.5 404.5,257.5 405.5,257.5 406.5,254.5 407.5,254.5 408.5,255.5 409.5,256.5 410.5,257.5 411.5,256.5 412.5,256.5 413.5,261.5 414.5,256.5 415.5,256.5 416.5,257.5 417.5,260.5 418.5,258.5 419.5,257.5 420.5,253.5 421.5,252.5 422.5,254.5 423.5,253.5 424.5,250.5 425.5,249.5 426.5,248.5 427.5,248.5 428.5,245.5 429.5,244.5 430.5,250.5 431.5,248.5 432.5,246.5 433.5,243.5 434.5,247.5 435.5,244.5 436.5,243.5 437.5,245.5 438.5,240.5 439.5,242.5 440.5,241.5 441.5,241.5 442.5,241.5 443.5,240.5 444.5,241.5 445.5,236.5 446.5,236.5 447.5,235.5 448.5,235.5 449.5,239.5 450.5,238.5 451.5,237.5 452.5,235.5 453.5,238.5 454.5,236.5 455.5,236.5 456.5,238.5 457.5,238.5 458.5,236.5 459.5,236.5 460.5,237.5 461.5,236.5 462.5,236.5 463.5,233.5 464.5,237.5 465.5,236.5 466.5,236.5 467.5,231.5 468.5,231.5 469.5,230.5 470.5,230.5 471.5,234.5 472.5,232.5 473.5,230.5 474.5,234.5 475.5,234.5 476.5,234.5 477.5,236.5 478.5,236.5 479.5,232.5 480.5,235.5 481.5,232.5 482.5,234.5 483.5,233.5 484.5,233.5 485.5,237.5 486.5,236.5 487.5,234.5 488.5,236.5 489.5,236.5 490.5,238.5 491.5,238.5 492.5,234.5 493.5,236.5 494.5,235.5 495.5,236.5 496.5,238.5 497.5,237.5 498.5,234.5 499.5,238.5 500.5,238.5 501.5,235.5 502.5,237.5 503.5,237.5 504.5,236.5 505.5,235.5 506.5,235.5 507.5,235.5 508.5,235.5 509.5,236.5 510.5,238.5 511.5,239.5 512.5,239.5 513.5,239.5 514.5,239.5 515.5,239.5 516.5,239.5 517.5,241.5 518.5,242.5 519.5,242.5 520.5,240.5 521.5,239.5 522.5,246.5 523.5,247.5 524.5,243.5 525.5,244.5 526.5,244.5 527.5,244.5 528.5,245.5 529.5,251.5 530.5,251.5 531.5,252.5 532.5,252.5 533.5,247.5 534.5,245.5 535.5,249.5 536.5,250.5 537.5,250.5 538.5,250.5 539.5,248.5 540.5,248.5 541.5,250.5 542.5,250.5 543.5,248.5 544.5,253.5 545.5,248.5 546.5,252.5 547.5,252.5 548.5,253.5 549.5,250.5 550.5,250.5 551.5,248.5 552.5,251.5 553.5,252.5 554.5,253.5 555.5,251.5 556.5,249.5 557.5,252.5 558.5,248.5 559.5,251.5 560.5,248.5 561.5,249.5 562.5,252.5 563.5,252.5 564.5,257.5 565.5,254.5 566.5,254.5 567.5,254.5 568.5,254.5 569.5,258.5 570.5,258.5 571.5,253.5 572.5,255.5 573.5,253.5 574.5,253.5 575.5,254.5 576.5,260.5 577.5,260.5 578.5,253.5 579.5,254.5 580.5,255.5 581.5,255.5 582.5,256.5 583.5,258.5 584.5,260.5 585.5,260.5 586.5,258.5 587.5,258.5 588.5,261.5 589.5,257.5 590.5,263.5 591.5,260.5 592.5,263.5 593.5,263.5 594.5,260.5 595.5,258.5 596.5,261.5 597.5,260.5 598.5,261.5 599.5,261.5 600.5,262.5 601.5,262.5 602.5,262.5 603.5,263.5 604.5,263.5 605.5,266.5 606.5,262.5 607.5,265.5 608.5,269.5 609.5,270.5 610.5,265.5 611.5,268.5 612.5,271.5 613.5,267.5 614.5,268.5 615.5,270.5 616.5,273.5 617.5,273.5 618.5,266.5 619.5,266.5 620.5,274.5 621.5,268.5 622.5,272.5 623.5,272.5 624.5,273.5 625.5,273.5 626.5,276.5 627.5,276.5 628.5,275.5 629.5,278.5 630.5,272.5 631.5,280.5 632.5,279.5 633.5,276.5 634.5,278.5 635.5,282.5 636.5,283.5 637.5,279.5 638.5,275.5 639.5,283.5 640.5,276.5 641.5,283.5 642.5,282.5 643.5,276.5 644.5,284.5 645.5,277.5 646.5,283.5 647.5,284.5 648.5,284.5 649.5,278.5 650.5,278.5 651.5,278.5 652.5,278.5 653.5,282.5 654.5,286.5 655.5,283.5 656.5,285.5 657.5,287.5 658.5,290.5 659.5,286.5 660.5,291.5 661.5,291.5 662.5,289.5 663.5,286.5 664.5,285.5 665.5,292.5 666.5,292.5 667.5,291.5 668.5,287.5 669.5,282.5 670.5,289.5 671.5,289.5 672.5,286.5 673.5,286.5 674.5,289.5 675.5,281.5 676.5,284.5 677.5,284.5 678.5,285.5 679.5,288.5 680.5,290.5 681.5,288.5 682.5,289.5 683.5,289.5 684.5,290.5 685.5,286.5 686.5,283.5 687.5,284.5 688.5,288.5 689.5,286.5 690.5,276.5 691.5,274.5 692.5,274.5 693.5,273.5 694.5,275.5 695.5,273.5 696.5,270.5 697.5,264.5 698.5,265.5 699.5,266.5 700.5,267.5 701.5,269.5 702.5,273.5 703.5,269.5 704.5,269.5 705.5,275.5 706.5,277.5 707.5,279.5 708.5,288.5 709.5,291.5 710.5,290.5 711.5,282.5 712.5,277.5 713.5,273.5 714.5,276.5 715.5,275.5 716.5,277.5 717.5,275.5 718.5,282.5 719.5,284.5 720.5,280.5 721.5,280.5 722.5,280.5 723.5,280.5 724.5,287.5 725.5,281.5 726.5,286.5 727.5,287.5 728.5,280.5 729.5,280.5 730.5,281.5 731.5,280.5 732.5,286.5 733.5,283.5 734.5,283.5 735.5,286.5 736.5,288.5 737.5,286.5 738.5,291.5 739.5,293.5 740.5,291.5 741.5,292.5 742.5,285.5 743.5,283.5 744.5,280.5 745.5,278.5 746.5,282.5 747.5,279.5 748.5,283.5 749.5,283.5 750.5,284.5 751.5,285.5 752.5,287.5 753.5,288.5 754.5,285.5 755.5,285.5 756.5,286.5 757.5,284.5 758.5,284.5 759.5,285.5 760.5,285.5 761.5,285.5 762.5,285.5 763.5,290.5 764.5,289.5 765.5,291.5 766.5,288.5 767.5,291.5 768.5,290.5 769.5,289.5 770.5,290.5 771.5,290.5 772.5,290.5 773.5,292.5 774.5,292.5 775.5,292.5 776.5,292.5 777.5,289.5 778.5,288.5 779.5,288.5 780.5,288.5 781.5,288.5 782.5,290.5 783.5,290.5 784.5,293.5 785.5,294.5 786.5,293.5 787.5,289.5 788.5,291.5 789.5,294.5 790.5,292.5 791.5,291.5 792.5,292.5 793.5,295.5 794.5,289.5 795.5,290.5 796.5,292.5 797.5,293.5 798.5,293.5 799.5,292.5 800.5,290.5 801.5,292.5 802.5,291.5 803.5,291.5 804.5,291.5 805.5,296.5 806.5,293.5 807.5,291.5 808.5,291.5"/>
</svg>
<!-- table -->
<div class="a" style="left:64px;top:402px;width:545px;height:177px;background:#fff;border:1px solid #a8a0a0"></div>
<div class="a" style="left:66px;top:438px;width:80px;height:16px;border:1px solid #9cc4ee;border-radius:2px;background:#f4f8fc"></div>
<div class="hc" style="left:65px;width:82px;background:#c8c8c8;color:#000;border-right:1px solid #e4e4e4">Time</div>
<div class="hc" style="left:147px;width:49px;background:#0000ff;color:#ffff00;border-right:1px solid #0000ff">RFPower</div>
<div class="hc" style="left:196px;width:49px;background:#ffff00;color:#000;border-right:1px solid #ffff00">MERx10</div>
<div class="hc" style="left:245px;width:49px;background:#ff0000;color:#ffffff;border-right:1px solid #ff0000">VBer%</div>
<div class="hc" style="left:294px;width:49px;background:#c8c8c8;color:#000;border-right:1px solid #e4e4e4">Vit. err</div>
<div class="hc" style="left:343px;width:49px;background:#c8c8c8;color:#000;border-right:1px solid #e4e4e4">TS err</div>
<div class="hc" style="left:392px;width:49px;background:#c8c8c8;color:#000;border-right:1px solid #e4e4e4">Freq lock</div>
<div class="hc" style="left:441px;width:49px;background:#c8c8c8;color:#000;border-right:1px solid #e4e4e4">SR lock</div>
<div class="hc" style="left:490px;width:49px;background:#c8c8c8;color:#000;border-right:1px solid #e4e4e4">FEC</div>
<div class="hc" style="left:539px;width:49px;background:#c8c8c8;color:#000;border-right:1px solid #e4e4e4">TS OK</div>
<div class="c" style="left:65px;top:421px;width:82px;padding-left:3px">15:27:00:526</div>
<div class="c" style="left:147px;top:421px;width:49px;padding-left:2px">-60</div>
<div class="c" style="left:196px;top:421px;width:49px;padding-left:2px">200</div>
<div class="c" style="left:245px;top:421px;width:49px;padding-left:2px">0</div>
<div class="c" style="left:294px;top:421px;width:49px;padding-left:2px">0</div>
<div class="c" style="left:343px;top:421px;width:49px;padding-left:2px">0</div>
<div class="c" style="left:392px;top:421px;width:49px;padding-left:2px">1</div>
<div class="c" style="left:441px;top:421px;width:49px;padding-left:2px">1</div>
<div class="c" style="left:490px;top:421px;width:49px;padding-left:2px">1/2</div>
<div class="c" style="left:539px;top:421px;width:49px;padding-left:2px">1</div>
<div class="c" style="left:65px;top:438px;width:82px;padding-left:3px">15:27:01:056</div>
<div class="c" style="left:147px;top:438px;width:49px;padding-left:2px">-58</div>
<div class="c" style="left:196px;top:438px;width:49px;padding-left:2px">200</div>
<div class="c" style="left:245px;top:438px;width:49px;padding-left:2px">0</div>
<div class="c" style="left:294px;top:438px;width:49px;padding-left:2px">0</div>
<div class="c" style="left:343px;top:438px;width:49px;padding-left:2px">0</div>
<div class="c" style="left:392px;top:438px;width:49px;padding-left:2px">1</div>
<div class="c" style="left:441px;top:438px;width:49px;padding-left:2px">1</div>
<div class="c" style="left:490px;top:438px;width:49px;padding-left:2px">1/2</div>
<div class="c" style="left:539px;top:438px;width:49px;padding-left:2px">1</div>
<div class="c" style="left:65px;top:455px;width:82px;padding-left:3px">15:27:01:578</div>
<div class="c" style="left:147px;top:455px;width:49px;padding-left:2px">-59</div>
<div class="c" style="left:196px;top:455px;width:49px;padding-left:2px">200</div>
<div class="c" style="left:245px;top:455px;width:49px;padding-left:2px">0</div>
<div class="c" style="left:294px;top:455px;width:49px;padding-left:2px">0</div>
<div class="c" style="left:343px;top:455px;width:49px;padding-left:2px">0</div>
<div class="c" style="left:392px;top:455px;width:49px;padding-left:2px">1</div>
<div class="c" style="left:441px;top:455px;width:49px;padding-left:2px">1</div>
<div class="c" style="left:490px;top:455px;width:49px;padding-left:2px">1/2</div>
<div class="c" style="left:539px;top:455px;width:49px;padding-left:2px">1</div>
<div class="c" style="left:65px;top:472px;width:82px;padding-left:3px">15:27:02:124</div>
<div class="c" style="left:147px;top:472px;width:49px;padding-left:2px">-58</div>
<div class="c" style="left:196px;top:472px;width:49px;padding-left:2px">200</div>
<div class="c" style="left:245px;top:472px;width:49px;padding-left:2px">0</div>
<div class="c" style="left:294px;top:472px;width:49px;padding-left:2px">0</div>
<div class="c" style="left:343px;top:472px;width:49px;padding-left:2px">0</div>
<div class="c" style="left:392px;top:472px;width:49px;padding-left:2px">1</div>
<div class="c" style="left:441px;top:472px;width:49px;padding-left:2px">1</div>
<div class="c" style="left:490px;top:472px;width:49px;padding-left:2px">1/2</div>
<div class="c" style="left:539px;top:472px;width:49px;padding-left:2px">1</div>
<div class="c" style="left:65px;top:489px;width:82px;padding-left:3px">15:27:02:684</div>
<div class="c" style="left:147px;top:489px;width:49px;padding-left:2px">-58</div>
<div class="c" style="left:196px;top:489px;width:49px;padding-left:2px">210</div>
<div class="c" style="left:245px;top:489px;width:49px;padding-left:2px">0</div>
<div class="c" style="left:294px;top:489px;width:49px;padding-left:2px">0</div>
<div class="c" style="left:343px;top:489px;width:49px;padding-left:2px">0</div>
<div class="c" style="left:392px;top:489px;width:49px;padding-left:2px">1</div>
<div class="c" style="left:441px;top:489px;width:49px;padding-left:2px">1</div>
<div class="c" style="left:490px;top:489px;width:49px;padding-left:2px">1/2</div>
<div class="c" style="left:539px;top:489px;width:49px;padding-left:2px">1</div>
<div class="c" style="left:65px;top:506px;width:82px;padding-left:3px">15:27:03:217</div>
<div class="c" style="left:147px;top:506px;width:49px;padding-left:2px">-58</div>
<div class="c" style="left:196px;top:506px;width:49px;padding-left:2px">210</div>
<div class="c" style="left:245px;top:506px;width:49px;padding-left:2px">0</div>
<div class="c" style="left:294px;top:506px;width:49px;padding-left:2px">0</div>
<div class="c" style="left:343px;top:506px;width:49px;padding-left:2px">0</div>
<div class="c" style="left:392px;top:506px;width:49px;padding-left:2px">1</div>
<div class="c" style="left:441px;top:506px;width:49px;padding-left:2px">1</div>
<div class="c" style="left:490px;top:506px;width:49px;padding-left:2px">1/2</div>
<div class="c" style="left:539px;top:506px;width:49px;padding-left:2px">1</div>
<div class="c" style="left:65px;top:523px;width:82px;padding-left:3px">15:27:03:761</div>
<div class="c" style="left:147px;top:523px;width:49px;padding-left:2px">-56</div>
<div class="c" style="left:196px;top:523px;width:49px;padding-left:2px">220</div>
<div class="c" style="left:245px;top:523px;width:49px;padding-left:2px">0</div>
<div class="c" style="left:294px;top:523px;width:49px;padding-left:2px">0</div>
<div class="c" style="left:343px;top:523px;width:49px;padding-left:2px">0</div>
<div class="c" style="left:392px;top:523px;width:49px;padding-left:2px">1</div>
<div class="c" style="left:441px;top:523px;width:49px;padding-left:2px">1</div>
<div class="c" style="left:490px;top:523px;width:49px;padding-left:2px">1/2</div>
<div class="c" style="left:539px;top:523px;width:49px;padding-left:2px">1</div>
<div class="c" style="left:65px;top:540px;width:82px;padding-left:3px">15:27:04:311</div>
<div class="c" style="left:147px;top:540px;width:49px;padding-left:2px">-56</div>
<div class="c" style="left:196px;top:540px;width:49px;padding-left:2px">220</div>
<div class="c" style="left:245px;top:540px;width:49px;padding-left:2px">0</div>
<div class="c" style="left:294px;top:540px;width:49px;padding-left:2px">0</div>
<div class="c" style="left:343px;top:540px;width:49px;padding-left:2px">0</div>
<div class="c" style="left:392px;top:540px;width:49px;padding-left:2px">1</div>
<div class="c" style="left:441px;top:540px;width:49px;padding-left:2px">1</div>
<div class="c" style="left:490px;top:540px;width:49px;padding-left:2px">1/2</div>
<div class="c" style="left:539px;top:540px;width:49px;padding-left:2px">1</div>
<div class="c" style="left:65px;top:557px;width:82px;padding-left:3px">15:27:04:869</div>
<div class="c" style="left:147px;top:557px;width:49px;padding-left:2px">-58</div>
<div class="c" style="left:196px;top:557px;width:49px;padding-left:2px">210</div>
<div class="c" style="left:245px;top:557px;width:49px;padding-left:2px">0</div>
<div class="c" style="left:294px;top:557px;width:49px;padding-left:2px">0</div>
<div class="c" style="left:343px;top:557px;width:49px;padding-left:2px">0</div>
<div class="c" style="left:392px;top:557px;width:49px;padding-left:2px">1</div>
<div class="c" style="left:441px;top:557px;width:49px;padding-left:2px">1</div>
<div class="c" style="left:490px;top:557px;width:49px;padding-left:2px">1/2</div>
<div class="c" style="left:539px;top:557px;width:49px;padding-left:2px">1</div>
<!-- scrollbar -->
<div class="a" style="left:591px;top:403px;width:17px;height:175px;background:linear-gradient(90deg,#e4e4e4,#f2f2f2 30%,#f0f0f0 80%,#e4e4e4)"></div>
<svg class="a" style="left:595px;top:409px" width="10" height="8"><path d="M1 6l4-4 4 4z" fill="#303030"/></svg>
<svg class="a" style="left:594px;top:565px" width="10" height="8"><path d="M1 2l4 4 4-4z" fill="#404040"/></svg>
<div class="a" style="left:591px;top:487px;width:15px;height:15px;border:1px solid #9a9a9a;border-radius:2px;background:linear-gradient(90deg,#f4f4f4,#e8e8e8 50%,#d0d0d0)"></div>
<!-- filename -->
<div class="a" style="left:146px;top:586px;font-size:10.9px">vk6mj_TiouneData_18_03_2014_15h23mn27s.txt</div>
<!-- time window -->
<div class="a" style="left:622px;top:431px;width:84px;height:121px;border:1px solid #fff;border-right-color:#a0a0a0;border-bottom-color:#a0a0a0"></div>
<div class="a" style="left:628px;top:446px;width:71px;height:98px;border:1px solid #fff;border-radius:3px"></div>
<div class="a" style="left:633px;top:440px;font-size:10.5px;background:#00ffff;padding:0 1px;color:#000">TimeWindow</div>
<div class="rad" style="top:458px"></div><div class="rl" style="top:457px">full data</div>
<div class="rad" style="top:475px"></div><div class="rl" style="top:474px">1H</div>
<div class="rad" style="top:492px"></div><div class="rl" style="top:491px">20mn</div>
<div class="rad" style="top:509px"></div><div class="rl" style="top:508px">10mn</div>
<div class="rad" style="top:526px"></div><div class="rl" style="top:525px">5mn</div>
<div class="a" style="left:638px;top:529px;width:6px;height:6px;border-radius:50%;background:radial-gradient(circle at 40% 35%,#9fd0f0,#1e5c94 60%,#0a2a50)"></div>
<!-- right -->
<div class="btn" style="left:737px;top:412px;width:111px;height:31px;line-height:30px;font-size:10.8px">Load TiouneData</div>
<div class="a" style="left:711px;top:451px;font-size:10.8px">Total Time= 0h 6mn 42sec 283msec</div>
<div class="a" style="left:711px;top:467px;font-size:10.8px">Total Time= 402283 msec</div>
<div class="a" style="left:711px;top:486px;font-size:10.8px">735 records</div>
<div class="a" style="left:711px;top:505px;font-size:10.8px"> 1,827 sample/sec</div>
<div class="btn" style="left:754px;top:524px;width:70px;height:50px;line-height:48px;font-size:11px">Quit</div>
</body></html>
